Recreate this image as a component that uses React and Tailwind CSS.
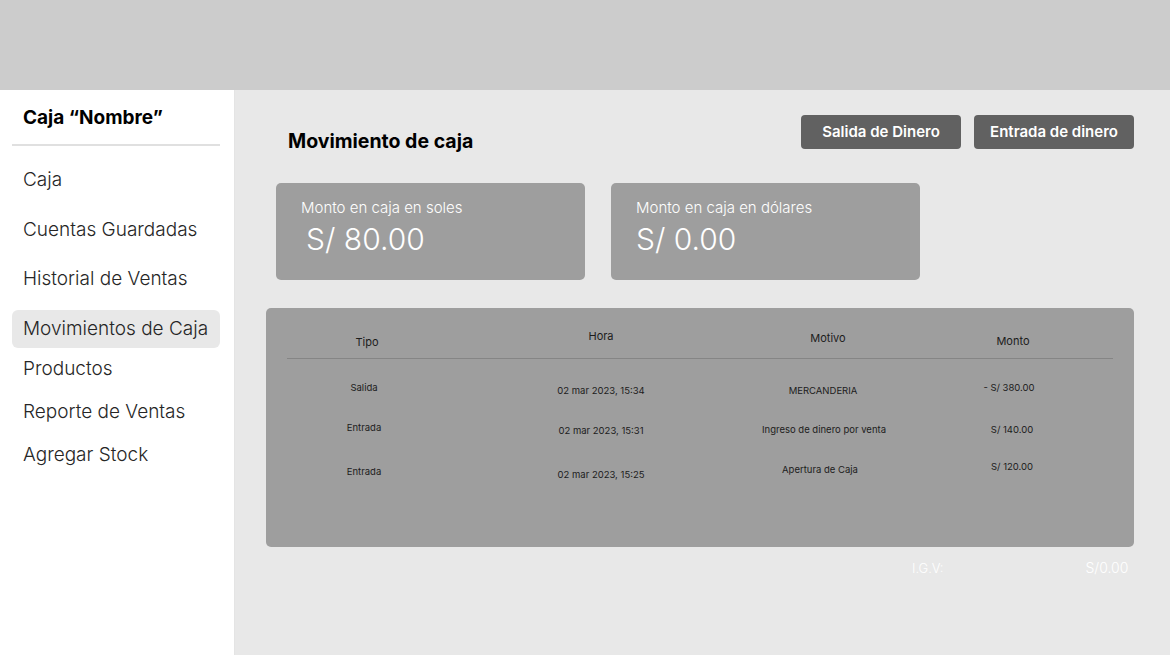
export default function App() {
  const items = [
    { label: "Caja", mt: "mt-[15px]" },
    { label: "Cuentas Guardadas", mt: "mt-[12px]" },
    { label: "Historial de Ventas", mt: "mt-[11px]" },
    { label: "Movimientos de Caja", mt: "mt-[12px]", active: true },
    { label: "Productos", mt: "mt-[2px]" },
    { label: "Reporte de Ventas", mt: "mt-[5px]" },
    { label: "Agregar Stock", mt: "mt-[5px]" },
  ];
  return (
    <div className="w-[1170px] h-[657px] bg-white flex flex-col font-['Inter','Noto_Sans',sans-serif] overflow-hidden">
      <div className="h-[90px] bg-[#cccccc] shrink-0" />
      <div className="flex h-[565px]">
        <aside className="w-[234px] bg-white shrink-0 flex flex-col">
          <div className="pt-[16px] pl-[23px] h-[54px] text-[19px] leading-[24px] font-bold text-black">
            Caja “Nombre”
          </div>
          <div className="ml-[12px] mr-[14px] h-[2px] bg-[#e0e0e0]" />
          {items.map((it) => (
            <div
              key={it.label}
              className={`${it.mt} ml-[12px] mr-[14px] h-[38px] pl-[11px] flex items-center rounded-[6px] text-[19px] font-['Inter_Light','Inter',sans-serif] font-extralight text-[#262626] ${it.active ? "bg-[#e8e8e8]" : ""}`}
            >
              {it.label}
            </div>
          ))}
        </aside>
        <main className="flex-1 bg-[#e8e8e8] border-l border-[#e4e4e4] pl-[31px] pr-[36px] flex flex-col">
          <div className="h-[93px] pt-[25px] flex justify-between">
            <h1 className="mt-[14px] ml-[22px] text-[19.5px] leading-[24px] font-bold text-black">
              Movimiento de caja
            </h1>
            <div className="flex gap-[13px]">
              <button className="w-[160px] h-[34px] rounded-[4px] bg-[#616161] text-white text-[15px] font-semibold">
                Salida de Dinero
              </button>
              <button className="w-[160px] h-[34px] rounded-[4px] bg-[#616161] text-white text-[15px] font-semibold">
                Entrada de dinero
              </button>
            </div>
          </div>
          <div className="flex gap-[26px] ml-[10px]">
            <div className="w-[309px] h-[97px] rounded-[5px] bg-[#9e9e9e] pl-[25px] pt-[15px] text-white">
              <div className="text-[15px] leading-[20px] font-light">Monto en caja en soles</div>
              <div className="mt-[3px] pl-[5px] text-[30px] leading-[36px] font-light">S/ 80.00</div>
            </div>
            <div className="w-[309px] h-[97px] rounded-[5px] bg-[#9e9e9e] pl-[25px] pt-[15px] text-white">
              <div className="text-[15px] leading-[20px] font-light">Monto en caja en dólares</div>
              <div className="mt-[3px] text-[30px] leading-[36px] font-light">S/ 0.00</div>
            </div>
          </div>
          <div className="mt-[28px] w-[868px] h-[239px] rounded-[5px] bg-[#9e9e9e] text-[#1c1c1c]">
            <div className="h-[50px] pl-[21px] pr-[17px] grid grid-cols-[160px_308px_154px_208px] text-[11px] leading-[14px] text-center">
              <div className="pt-[27px]">Tipo</div>
              <div className="pt-[21px]">Hora</div>
              <div className="pt-[23px] pr-[8px]">Motivo</div>
              <div className="pt-[26px]">Monto</div>
            </div>
            <div className="mx-[21px] h-[1px] bg-[#858585]" />
            <div className="h-[40px] pl-[21px] pr-[17px] grid grid-cols-[160px_308px_154px_208px] text-[9.5px] leading-[12px] text-center">
              <div className="pt-[23px] pr-[6px]">Salida</div>
              <div className="pt-[26px]">02 mar 2023, 15:34</div>
              <div className="pt-[26px] pr-[18px]">MERCANDERIA</div>
              <div className="pt-[23px] pr-[8px]">- S/ 380.00</div>
            </div>
            <div className="h-[40px] pl-[21px] pr-[17px] grid grid-cols-[160px_308px_154px_208px] text-[9.5px] leading-[12px] text-center">
              <div className="pt-[23px] pr-[6px]">Entrada</div>
              <div className="pt-[26px]">02 mar 2023, 15:31</div>
              <div className="pt-[25px] pr-[16px]">Ingreso de dinero por venta</div>
              <div className="pt-[25px] pr-[2px]">S/ 140.00</div>
            </div>
            <div className="h-[40px] pl-[21px] pr-[17px] grid grid-cols-[160px_308px_154px_208px] text-[9.5px] leading-[12px] text-center">
              <div className="pt-[27px] pr-[6px]">Entrada</div>
              <div className="pt-[30px]">02 mar 2023, 15:25</div>
              <div className="pt-[25px] pr-[24px]">Apertura de Caja</div>
              <div className="pt-[22px] pr-[2px]">S/ 120.00</div>
            </div>
          </div>
          <div className="mt-[12px] flex text-white font-light">
            <div className="ml-[646px] text-[13px] leading-[18px]">I.G.V:</div>
            <div className="ml-[142px] text-[14px] leading-[18px]">S/0.00</div>
          </div>
        </main>
      </div>
    </div>
  );
}
